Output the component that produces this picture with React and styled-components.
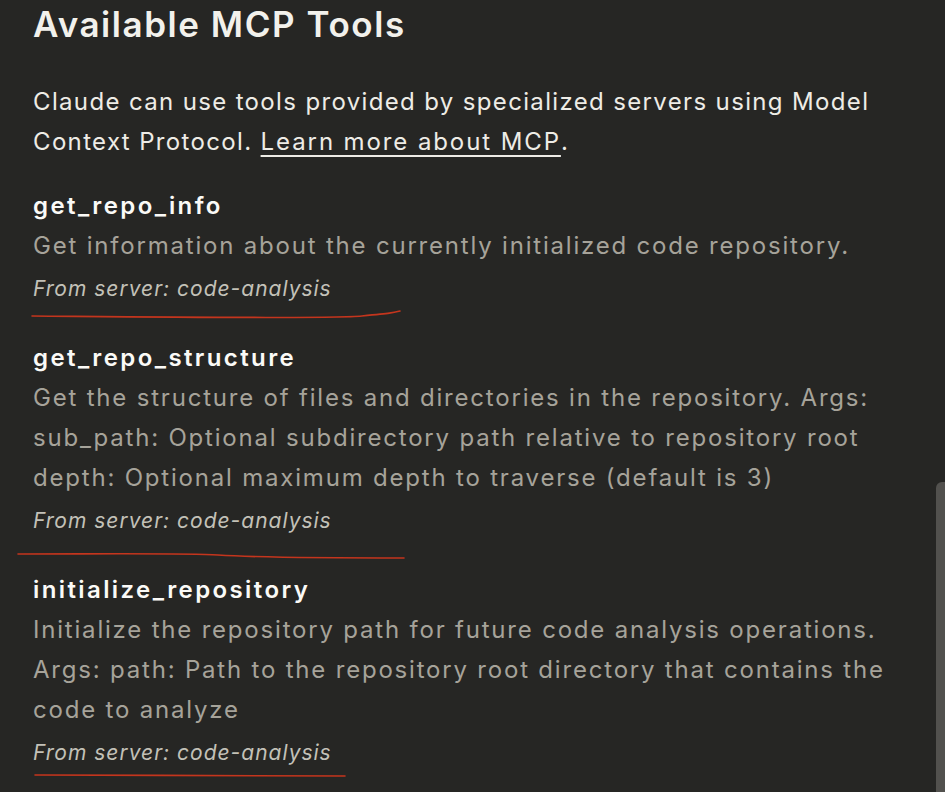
import React from 'react';
import styled, { createGlobalStyle } from 'styled-components';

const GlobalStyle = createGlobalStyle`
  html, body {
    margin: 0;
    padding: 0;
    background: #262624;
    overflow: hidden;
  }
  body {
    font-family: Inter, "Noto Sans", sans-serif;
    -webkit-font-smoothing: antialiased;
  }
`

const tools = [
  {
    name: 'get_repo_info',
    description: 'Get information about the currently initialized code repository.',
    server: 'code-analysis',
    mark: { d: 'M0 6 C 120 7, 300 9, 330 6 S 360 3, 368 1', width: 370, left: -1, top: 41 }
  },
  {
    name: 'get_repo_structure',
    description: 'Get the structure of files and directories in the repository. Args: sub_path: Optional subdirectory path relative to repository root depth: Optional maximum depth to traverse (default is 3)',
    server: 'code-analysis',
    mark: { d: 'M0 2 C 80 2, 170 1, 200 3 S 300 6, 386 6', width: 390, left: -15, top: 51 }
  },
  {
    name: 'initialize_repository',
    description: 'Initialize the repository path for future code analysis operations. Args: path: Path to the repository root directory that contains the code to analyze',
    server: 'code-analysis',
    mark: { d: 'M0 3 C 100 3, 220 4, 310 4', width: 314, left: 2, top: 39 }
  }
]

function Scribble ({ d, width, left, top }) {
  return (
    <Mark width={width} height='10' viewBox={`0 0 ${width} 10`} style={{ left, top }}>
      <path d={d} fill='none' stroke='#c4351d' strokeWidth='1.6' strokeLinecap='round' />
    </Mark>
  )
}

export default function App () {
  return (
    <Page>
      <GlobalStyle />
      <Title>Available MCP Tools</Title>
      <Intro>
        Claude can use tools provided by specialized servers using Model Context Protocol. <Link>Learn more about MCP</Link>.
      </Intro>
      <List>
        {tools.map((tool) => (
          <Tool key={tool.name}>
            <ToolName>{tool.name}</ToolName>
            <Description>{tool.description}</Description>
            <Server>
              From server: {tool.server}
              <Scribble {...tool.mark} />
            </Server>
          </Tool>
        ))}
      </List>
      <Scrollbar />
    </Page>
  )
}

const Page = styled.div`
  position: relative;
  width: 945px;
  height: 792px;
  box-sizing: border-box;
  padding: 0 36px 0 33px;
  overflow: hidden;
`

const Title = styled.h1`
  margin: 0;
  padding-top: 3px;
  font-size: 35px;
  line-height: 42px;
  font-weight: 600;
  color: #f2f1ec;
  letter-spacing: 1.55px;
`

const Intro = styled.p`
  margin: 37px 0 0;
  font-size: 24px;
  line-height: 40px;
  color: #eeece6;
  letter-spacing: 1.35px;
`

const Link = styled.a`
  color: inherit;
  letter-spacing: 1.9px;
  text-decoration: underline;
  text-underline-offset: 5px;
  text-decoration-thickness: 2px;
`

const List = styled.div`
  display: flex;
  flex-direction: column;
  gap: 29px;
  margin-top: 24px;
`

const Tool = styled.div`
  display: flex;
  flex-direction: column;
`

const ToolName = styled.div`
  font-size: 24px;
  line-height: 40px;
  font-weight: 600;
  color: #fbfaf7;
  letter-spacing: 2.4px;
`

const Description = styled.div`
  font-size: 24px;
  line-height: 40px;
  color: #a6a39a;
  letter-spacing: 1.8px;
`

const Server = styled.div`
  position: relative;
  margin-top: 3px;
  font-size: 21px;
  line-height: 40px;
  font-style: italic;
  color: #c3c1b8;
  letter-spacing: 1px;
`

const Mark = styled.svg`
  position: absolute;
  overflow: visible;
`

const Scrollbar = styled.div`
  position: absolute;
  right: 0;
  top: 482px;
  width: 9px;
  height: 320px;
  border-radius: 6px 0 0 0;
  background: #52514e;
`
